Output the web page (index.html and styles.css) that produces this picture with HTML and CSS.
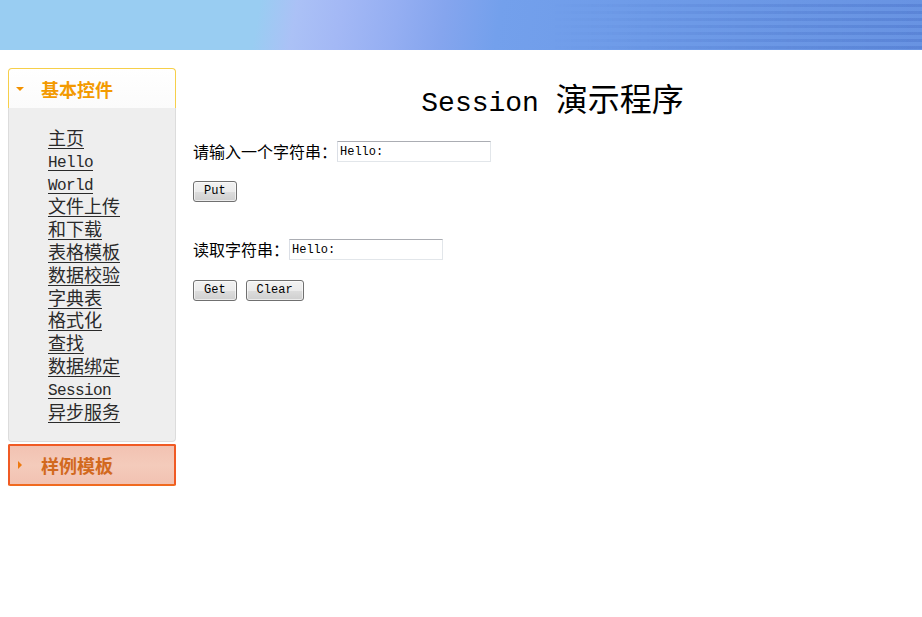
FILE: index.html
```html
<!DOCTYPE html>
<html lang="zh-CN">
<head>
<meta charset="utf-8">
<title>Session 演示程序</title>
<link rel="stylesheet" href="styles.css">
</head>
<body>
<header class="banner"></header>
<div class="layout">
  <aside class="sidebar">
    <section class="panel panel-open">
      <div class="panel-head"><span class="tri-down"></span><span class="panel-title">基本控件</span></div>
      <ul class="panel-body">
        <li><a href="#">主页</a></li>
        <li><a href="#" class="en">Hello</a></li>
        <li><a href="#" class="en">World</a></li>
        <li><a href="#">文件上传</a></li>
        <li><a href="#">和下载</a></li>
        <li><a href="#">表格模板</a></li>
        <li><a href="#">数据校验</a></li>
        <li><a href="#">字典表</a></li>
        <li><a href="#">格式化</a></li>
        <li><a href="#">查找</a></li>
        <li><a href="#">数据绑定</a></li>
        <li><a href="#" class="en">Session</a></li>
        <li><a href="#">异步服务</a></li>
      </ul>
    </section>
    <section class="panel panel-closed">
      <div class="panel-head"><span class="tri-right"></span><span class="panel-title">样例模板</span></div>
    </section>
  </aside>
  <main class="main">
    <h1 class="title"><span class="title-en">Session </span>演示程序</h1>
    <div class="row row-first">
      <label class="label">请输入一个字符串：</label>
      <input class="field" type="text" value="Hello:">
    </div>
    <div class="row row-btn">
      <button class="btn">Put</button>
    </div>
    <div class="row row-second">
      <label class="label">读取字符串：</label>
      <input class="field" type="text" value="Hello:">
    </div>
    <div class="row row-btn2">
      <button class="btn">Get</button>
      <button class="btn">Clear</button>
    </div>
  </main>
</div>
</body>
</html>
```
FILE: styles.css
```css
* { box-sizing: border-box; }
html, body { margin: 0; padding: 0; background: #fff; }
body {
  font-family: "Noto Sans CJK SC", "Liberation Sans", sans-serif;
  color: #000;
}

.banner {
  position: relative;
  height: 50px;
  background: linear-gradient(100deg,
    #99cdf2 0%, #99cdf2 28%, #abc1f6 32%, #a3b8f5 37%,
    #94aef2 43%, #85a5ee 48%, #73a0ec 54%, #6e9be8 70%, #6893e2 100%);
  overflow: hidden;
}
.banner::after {
  content: "";
  position: absolute;
  inset: 0;
  background: repeating-linear-gradient(180deg,
    rgba(60, 100, 190, 0) 0px, rgba(60, 100, 190, 0) 4px,
    rgba(60, 100, 190, 0.3) 4px, rgba(60, 100, 190, 0.3) 7px);
  -webkit-mask-image: linear-gradient(90deg, transparent 0%, transparent 60%, rgba(0,0,0,0.6) 80%, #000 100%);
  mask-image: linear-gradient(90deg, transparent 0%, transparent 60%, rgba(0,0,0,0.6) 80%, #000 100%);
}

.layout {
  display: flex;
  align-items: flex-start;
  padding-top: 18px;
}

.sidebar {
  width: 168px;
  margin-left: 8px;
  display: flex;
  flex-direction: column;
  gap: 2px;
}

.panel-head {
  display: flex;
  align-items: center;
  height: 40px;
  padding-left: 7px;
}
.panel-title {
  font-weight: bold;
  font-size: 18px;
  margin-left: 17px;
}

.panel-open .panel-head {
  border: 1px solid #f6cf4a;
  border-bottom: none;
  border-radius: 4px 4px 0 0;
  background: linear-gradient(#ffffff, #fbfbfb);
  color: #f39a00;
}
.tri-down {
  width: 0; height: 0;
  border-left: 4px solid transparent;
  border-right: 4px solid transparent;
  border-top: 4px solid #f39200;
}

.panel-body {
  list-style: none;
  margin: 0;
  padding: 18px 0 18px 39px;
  background: #eeeeee;
  border: 1px solid #dcdcdc;
  border-top: none;
  border-radius: 0 0 4px 4px;
  height: 334px;
}
.panel-body li {
  line-height: 22.8px;
  height: 22.8px;
}
.panel-body a {
  font-size: 18px;
  color: #2a2a2a;
  text-decoration: underline;
  text-underline-offset: 3px;
  font-family: "Noto Sans CJK SC", sans-serif;
}
.panel-body a.en {
  font-family: "Liberation Mono", monospace;
  font-size: 16px;
  letter-spacing: -0.6px;
}

.panel-closed .panel-head {
  height: 42px;
  border: 2px solid #f05a24;
  border-radius: 2px;
  background: linear-gradient(#f2c2b2, #f4cbbb 50%, #f2c2b2);
  color: #d2691e;
  padding-left: 8px;
  border-bottom-color: #f06a20;
}
.panel-closed .panel-title { margin-left: 19px; }
.tri-right {
  width: 0; height: 0;
  border-top: 4px solid transparent;
  border-bottom: 4px solid transparent;
  border-left: 4px solid #ee7a10;
}

.main {
  flex: 1;
  padding: 0 10px 0 17px;
  display: flex;
  flex-direction: column;
}
.title {
  margin: 9px 0 0;
  height: 40px;
  line-height: 40px;
  text-align: center;
  font-size: 32px;
  font-weight: normal;
  font-family: "Noto Sans CJK SC", sans-serif;
}
.title-en {
  font-family: "Liberation Mono", monospace;
  font-size: 28px;
  white-space: pre;
}

.row {
  display: flex;
  align-items: center;
  height: 22px;
}
.row-first { margin-top: 23px; }
.row-btn { margin-top: 18px; }
.row-second { margin-top: 36px; }
.row-btn2 { margin-top: 19px; gap: 9px; }

.label {
  font-size: 16px;
  line-height: 22px;
}
.field {
  width: 154px;
  height: 21px;
  padding: 1px 2px 0;
  margin: 0;
  font-family: "Liberation Mono", monospace;
  font-size: 12px;
  color: #000;
  border: 1px solid #e2e6ea;
  border-top-color: #abadb3;
  border-left-color: #dbdfe6;
  background: #fff;
  outline: none;
}

.btn {
  height: 21px;
  margin: 0;
  padding: 0 10px;
  font-family: "Liberation Mono", monospace;
  font-size: 12px;
  color: #000;
  border: 1px solid #707070;
  border-radius: 3px;
  background: linear-gradient(#f2f2f2 0%, #ebebeb 50%, #dddddd 51%, #cfcfcf 100%);
  box-shadow: inset 0 0 0 1px rgba(255,255,255,0.6);
}
```
